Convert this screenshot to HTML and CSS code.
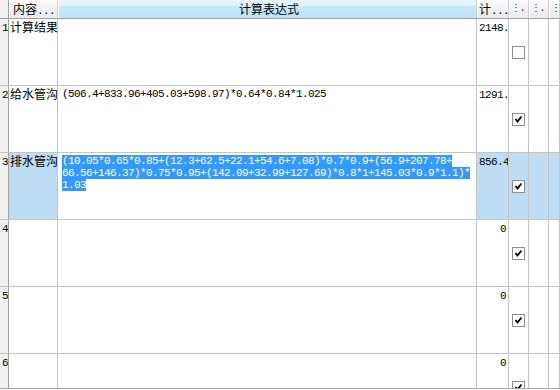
FILE: index.html
```html
<!DOCTYPE html>
<html lang="zh">
<head>
    <meta charset="UTF-8">
    <title>计算表达式</title>
    <link rel="stylesheet" href="styles.css">
</head>
<body>
<div class="grid">
    <div class="row head">
        <div class="cell rh"></div>
        <div class="cell cn">内容<span class="num">...</span></div>
        <div class="cell expr sorted">计算表达式</div>
        <div class="cell val-h">计<span class="num">...</span></div>
        <div class="cell narrow">⋮.</div>
        <div class="cell narrow">⋮.</div>
        <div class="cell narrow">⋮.</div>
    </div>

    <div class="row">
        <div class="cell rh">1</div>
        <div class="cell cn">计算结果</div>
        <div class="cell expr"></div>
        <div class="cell val">2148.</div>
        <div class="cell chk"><span class="box"></span></div>
        <div class="cell"></div>
        <div class="cell"></div>
    </div>

    <div class="row">
        <div class="cell rh">2</div>
        <div class="cell cn">给水管沟</div>
        <div class="cell expr">(506.4+833.96+405.03+598.97)*0.64*0.84*1.025</div>
        <div class="cell val">1291.</div>
        <div class="cell chk"><span class="box"><svg viewBox="0 0 11 11"><path d="M2.5 5 L4.5 7.5 L8.5 2.5"/></svg></span></div>
        <div class="cell"></div>
        <div class="cell"></div>
    </div>

    <div class="row selected">
        <div class="cell rh">3</div>
        <div class="cell cn">排水管沟</div>
        <div class="cell expr editing"><span class="hl">(10.05*0.65*0.85+(12.3+62.5+22.1+54.6+7.08)*0.7*0.9+(56.9+207.78+<br>66.56+146.37)*0.75*0.95+(142.09+32.99+127.69)*0.8*1+145.03*0.9*1.1)*<br>1.03</span></div>
        <div class="cell val">856.4</div>
        <div class="cell chk"><span class="box"><svg viewBox="0 0 11 11"><path d="M2.5 5 L4.5 7.5 L8.5 2.5"/></svg></span></div>
        <div class="cell"></div>
        <div class="cell"></div>
    </div>

    <div class="row">
        <div class="cell rh">4</div>
        <div class="cell cn"></div>
        <div class="cell expr"></div>
        <div class="cell val">0</div>
        <div class="cell chk"><span class="box"><svg viewBox="0 0 11 11"><path d="M2.5 5 L4.5 7.5 L8.5 2.5"/></svg></span></div>
        <div class="cell"></div>
        <div class="cell"></div>
    </div>

    <div class="row">
        <div class="cell rh">5</div>
        <div class="cell cn"></div>
        <div class="cell expr"></div>
        <div class="cell val">0</div>
        <div class="cell chk"><span class="box"><svg viewBox="0 0 11 11"><path d="M2.5 5 L4.5 7.5 L8.5 2.5"/></svg></span></div>
        <div class="cell"></div>
        <div class="cell"></div>
    </div>

    <div class="row">
        <div class="cell rh">6</div>
        <div class="cell cn"></div>
        <div class="cell expr"></div>
        <div class="cell val">0</div>
        <div class="cell chk"><span class="box"><svg viewBox="0 0 11 11"><path d="M2.5 5 L4.5 7.5 L8.5 2.5"/></svg></span></div>
        <div class="cell"></div>
        <div class="cell"></div>
    </div>
</div>
</body>
</html>
```

FILE: styles.css
```css
/* Global */
* {
    margin: 0;
    padding: 0;
    box-sizing: border-box;
}

body {
    background-color: white;
    font-family: "Liberation Mono", "Noto Sans CJK SC", monospace;
    font-size: 11px;
    letter-spacing: -0.6px;
    color: #000;
}

/* Grid */
.grid {
    width: 560px;
    height: 389px;
    overflow: hidden;
    border-bottom: 1px solid #a8a8a8;
}

.row {
    display: grid;
    grid-template-columns: 9px 49px 419px 32px 20px 20px 1fr;
    height: 67px;
    border-bottom: 1px solid #c4c4c4;
}

.cell {
    border-right: 1px solid #c4c4c4;
    overflow: hidden;
    white-space: nowrap;
    line-height: 12px;
    padding: 2px 0 0 0;
}

.rh {
    background-color: #f0f0f0;
    border-right: 1px solid #a0a0a0;
    padding: 3px 0 0 2px;
}

.cn {
    font-family: "Noto Sans CJK SC", sans-serif;
    font-size: 12px;
    letter-spacing: 0;
    line-height: 14px;
    padding: 1px 0 0 1px;
}

.num {
    font-family: "Liberation Mono", monospace;
    font-size: 11px;
    letter-spacing: -0.6px;
}

.expr {
    padding: 2px 0 0 4px;
}

.val {
    text-align: right;
    padding: 3px 2px 0 2px;
}

.chk {
    display: flex;
    align-items: center;
    justify-content: center;
    padding: 0 1px 0 0;
}

.box {
    display: block;
    width: 13px;
    height: 13px;
    border: 1px solid #8e8e8e;
    background-color: white;
}

.box svg {
    display: block;
    width: 11px;
    height: 11px;
}

.box path {
    fill: none;
    stroke: #000;
    stroke-width: 1.8;
}

/* Header */
.head {
    height: 19px;
    border-bottom: 1px solid #a0a0a0;
}

.head .cell {
    background: linear-gradient(#fdfdfd, #f3f3f3 45%, #ebebeb);
    border-right: 1px solid #d0d0d0;
    box-shadow: inset 1px 0 0 #ffffff;
    padding-top: 3px;
}

.head .rh {
    background: #f0f0f0;
    border-right: 1px solid #a0a0a0;
    box-shadow: none;
}

.head .cn {
    padding: 2px 0 0 4px;
}

.head .sorted {
    background: linear-gradient(#e6f5fd, #e3f4fc 30%, #c6e8fa 36%, #bde3f7);
    text-align: center;
    font-family: "Noto Sans CJK SC", sans-serif;
    font-size: 12px;
    letter-spacing: 0;
    line-height: 14px;
    padding-top: 2px;
}

.head .val-h {
    font-family: "Noto Sans CJK SC", sans-serif;
    font-size: 12px;
    letter-spacing: 0;
    line-height: 14px;
    padding: 2px 0 0 2px;
}

.head .narrow {
    padding: 3px 0 0 2px;
    font-size: 10px;
    letter-spacing: -1.5px;
    color: #222;
}

/* Selected row */
.selected .cell {
    background-color: #bfdcf5;
}

.selected .rh {
    background-color: #f0f0f0;
}

.selected .editing {
    background-color: white;
    white-space: normal;
    padding-left: 4px;
}

.hl {
    background-color: #3399ff;
    color: white;
}
```
